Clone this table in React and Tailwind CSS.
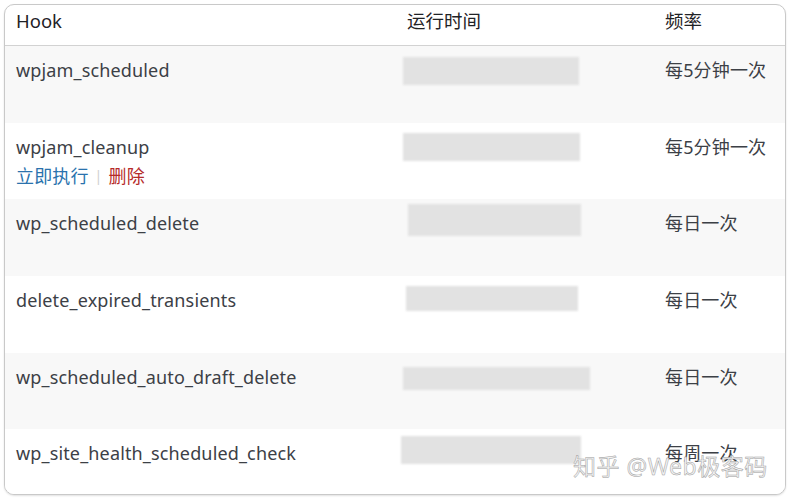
const rows = [
  { hook: "wpjam_scheduled", freq: "每5分钟一次", bar: "ml-[7px] mt-[11px] w-[176px] h-[28px]" },
  { hook: "wpjam_cleanup", freq: "每5分钟一次", bar: "ml-[7px] mt-[10px] w-[177px] h-[28px]", actions: true },
  { hook: "wp_scheduled_delete", freq: "每日一次", bar: "ml-[12px] mt-[5px] w-[173px] h-[32px]" },
  { hook: "delete_expired_transients", freq: "每日一次", bar: "ml-[10px] mt-[10px] w-[172px] h-[25px]" },
  { hook: "wp_scheduled_auto_draft_delete", freq: "每日一次", bar: "ml-[7px] mt-[14px] w-[187px] h-[23px]" },
  { hook: "wp_site_health_scheduled_check", freq: "每周一次", bar: "ml-[5px] mt-[7px] w-[180px] h-[28px]" },
];

const font = "font-['Noto_Sans','Noto_Sans_CJK_SC',sans-serif]";

export default function App() {
  return (
    <div className={`w-[790px] h-[500px] bg-white pt-[4px] pl-[4px] ${font}`}>
      <div className="relative w-[782px] h-[491px] overflow-hidden rounded-[10px] border border-[#c9c9c9] bg-white shadow-[0_1px_2px_rgba(0,0,0,0.12)]">
        <div className="grid grid-cols-[391px_258px_1fr] h-[41px] border-b border-[#d2d2d2] text-[18.5px] text-[#1f2226]">
          <div className="pl-[11px] pt-[2px]">Hook</div>
          <div className="pl-[11px] pt-[2px]">运行时间</div>
          <div className="pl-[11px] pt-[2px]">频率</div>
        </div>
        {rows.map((r, i) => (
          <div
            key={r.hook}
            className={`grid grid-cols-[391px_258px_1fr] h-[76.7px] text-[18px] tracking-[0.15px] text-[#3c4046] ${
              i % 2 === 0 ? "bg-[#f8f8f8]" : "bg-white"
            }`}
          >
            <div className="pl-[11px] pt-[9px] leading-[30px]">
              <div>{r.hook}</div>
              {r.actions && (
                <div className="flex items-center -mt-[1px]">
                  <span className="text-[#2a72ad]">立即执行</span>
                  <span className="mx-[6px] text-[#d0d0d0] text-[14px]">|</span>
                  <span className="text-[#b52a2a]">删除</span>
                </div>
              )}
            </div>
            <div>
              <div className={`${r.bar} bg-[#e2e2e2] blur-[1px]`} />
            </div>
            <div className="pl-[11px] pt-[9px] leading-[30px]">{r.freq}</div>
          </div>
        ))}
        <div className="absolute left-[568px] top-[444px] text-[23px] tracking-[0.5px] text-[#f3f3f3] [-webkit-text-stroke:0.5px_#a0a0a0]">
          知乎 @Web极客码
        </div>
      </div>
    </div>
  );
}
